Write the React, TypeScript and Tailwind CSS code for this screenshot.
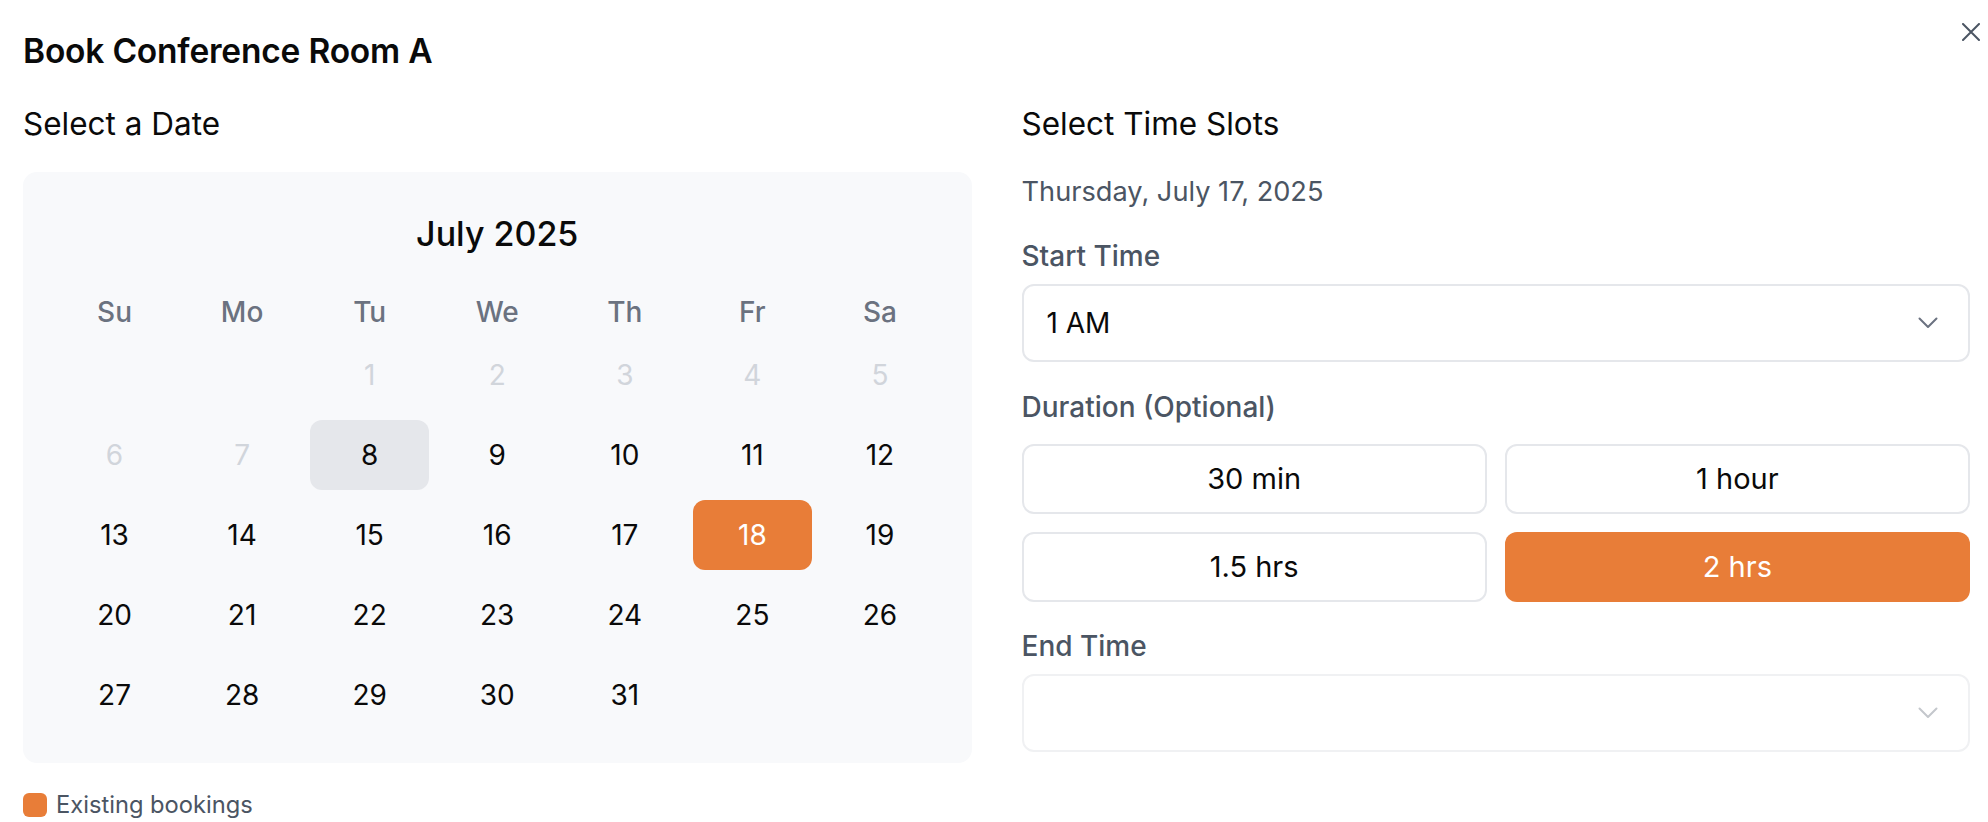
import React from "react";

const Chevron = ({ className }: { className: string }) => (
  <svg width="20" height="12" viewBox="0 0 20 12" fill="none" className={className}>
    <path d="M1.5 1.5 L10 10 L18.5 1.5" stroke="currentColor" strokeWidth="2" strokeLinecap="round" strokeLinejoin="round" />
  </svg>
);

type Day = { n: number | null; kind?: "disabled" | "today" | "booked" | "normal" };

const weeks: Day[][] = [
  [{ n: null }, { n: null }, { n: 1, kind: "disabled" }, { n: 2, kind: "disabled" }, { n: 3, kind: "disabled" }, { n: 4, kind: "disabled" }, { n: 5, kind: "disabled" }],
  [{ n: 6, kind: "disabled" }, { n: 7, kind: "disabled" }, { n: 8, kind: "today" }, { n: 9 }, { n: 10 }, { n: 11 }, { n: 12 }],
  [{ n: 13 }, { n: 14 }, { n: 15 }, { n: 16 }, { n: 17 }, { n: 18, kind: "booked" }, { n: 19 }],
  [{ n: 20 }, { n: 21 }, { n: 22 }, { n: 23 }, { n: 24 }, { n: 25 }, { n: 26 }],
  [{ n: 27 }, { n: 28 }, { n: 29 }, { n: 30 }, { n: 31 }, { n: null }, { n: null }],
];

function DayCell({ d }: { d: Day }) {
  if (d.n === null) return <div className="h-[70px]" />;
  let cls = "text-[#0a0a0a]";
  if (d.kind === "disabled") cls = "text-[#d1d5db]";
  if (d.kind === "today") cls = "bg-[#e5e7eb] text-[#0a0a0a]";
  if (d.kind === "booked") cls = "bg-[#e87d38] text-white";
  return (
    <div className={`h-[70px] flex items-center justify-center rounded-[12px] text-[28px] leading-[40px] ${cls}`}>
      {d.n}
    </div>
  );
}

export default function App() {
  const weekdays = ["Su", "Mo", "Tu", "We", "Th", "Fr", "Sa"];
  const durations = [
    { label: "30 min", active: false },
    { label: "1 hour", active: false },
    { label: "1.5 hrs", active: false },
    { label: "2 hrs", active: true },
  ];
  return (
    <div className="relative w-[1988px] h-[822px] bg-white overflow-hidden pl-[23px] pr-[18px] font-['Inter','Noto_Sans',sans-serif] text-[#0a0a0a]">
      <button className="absolute top-[23px] right-[8px] w-[18px] h-[18px] text-[#4b5563]">
        <svg width="18" height="18" viewBox="0 0 18 18" fill="none">
          <path d="M1 1 L17 17 M17 1 L1 17" stroke="currentColor" strokeWidth="2" strokeLinecap="round" />
        </svg>
      </button>

      <div className="pt-[31px]">
        <h1 className="text-[33.5px] leading-[40px] font-semibold tracking-[-0.2px]">Book Conference Room A</h1>
      </div>

      <div className="mt-[33px] grid grid-cols-2 gap-[50px]">
        {/* Left column */}
        <div>
          <h2 className="text-[31.5px] leading-[40px] font-normal">Select a Date</h2>
          <div className="mt-[28px] h-[591px] rounded-[14px] bg-[#f8f9fb] px-[32px] pt-[37px] pb-[33px]">
            <div className="h-[48px] flex items-center justify-center text-[34px] font-medium">July 2025</div>
            <div className="mt-[27px] grid grid-cols-7 gap-x-[8.5px] h-[56px] items-center">
              {weekdays.map((w) => (
                <div key={w} className="text-center text-[28px] font-medium text-[#6b7280]">
                  {w}
                </div>
              ))}
            </div>
            <div className="grid grid-cols-7 gap-x-[8.5px] gap-y-[10px]">
              {weeks.flat().map((d, i) => (
                <DayCell key={i} d={d} />
              ))}
            </div>
          </div>
          <div className="mt-[24px] flex items-center gap-[9px] h-[35px]">
            <div className="w-[24px] h-[24px] rounded-[6px] bg-[#e87d38]" />
            <span className="text-[23.7px] leading-[35px] text-[#4b5563]">Existing bookings</span>
          </div>
        </div>

        {/* Right column */}
        <div>
          <h2 className="text-[31.5px] leading-[40px] font-normal">Select Time Slots</h2>
          <div className="mt-[28px] text-[27.2px] leading-[40px] text-[#4b5563]">Thursday, July 17, 2025</div>

          <div className="mt-[24px] text-[28px] leading-[40px] font-medium text-[#4b5563]">Start Time</div>
          <div className="mt-[8px] h-[78px] rounded-[12px] border-2 border-[#e5e7eb] bg-white flex items-center justify-between pl-[23px] pr-[30px]">
            <span className="text-[28px] leading-[40px]">1 AM</span>
            <Chevron className="text-[#6b7280]" />
          </div>

          <div className="mt-[25px] text-[28px] leading-[40px] font-medium text-[#4b5563]">Duration (Optional)</div>
          <div className="mt-[17px] grid grid-cols-2 gap-[18px]">
            {durations.map((d) => (
              <div
                key={d.label}
                className={`h-[70px] rounded-[12px] flex items-center justify-center text-[29px] font-normal ${
                  d.active ? "bg-[#e87d38] text-white" : "border-2 border-[#e5e7eb] bg-white text-[#0a0a0a]"
                }`}
              >
                {d.label}
              </div>
            ))}
          </div>

          <div className="mt-[24px] text-[28px] leading-[40px] font-medium text-[#4b5563]">End Time</div>
          <div className="mt-[8px] h-[78px] rounded-[12px] border-2 border-[#f0f1f3] bg-white flex items-center justify-end pr-[30px]">
            <Chevron className="text-[#c4c7cc]" />
          </div>
        </div>
      </div>
    </div>
  );
}
